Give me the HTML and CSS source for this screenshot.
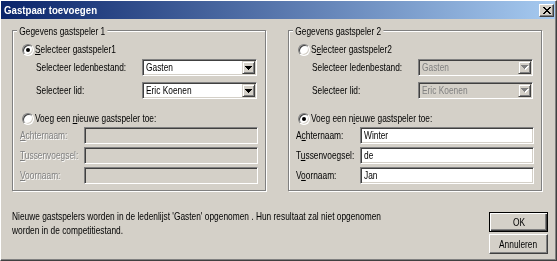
FILE: index.html
```html
<!DOCTYPE html>
<html lang="nl">
<head>
<meta charset="utf-8">
<title>Gastpaar toevoegen</title>
<link rel="stylesheet" href="styles.css">
</head>
<body>
<div class="window">
  <div class="titlebar">
    <span class="title">Gastpaar toevoegen</span>
    <span class="close"><svg width="8" height="7" viewBox="0 0 8 7"><path d="M0 0h2v1H0zM6 0h2v1H6zM1 1h2v1H1zM5 1h2v1H5zM2 2h4v1H2zM3 3h2v1H3zM2 4h4v1H2zM1 5h2v1H1zM5 5h2v1H5zM0 6h2v1H0zM6 6h2v1H6z"/></svg></span>
  </div>
  <div class="content">
    <div class="groups">
      <section class="group">
        <span class="legend">Gegevens gastspeler 1</span>
        <div class="radio-row"><span class="radio checked"></span><span class="t"><u>S</u>electeer gastspeler1</span></div>
        <div class="combo-row first"><span class="label"><span class="t">Selecteer ledenbestand:</span></span><span class="combo"><span class="value t">Gasten</span><span class="drop"><svg width="7" height="4" viewBox="0 0 7 4"><path d="M0 0h7v1H6v1H5v1H4v1H3V3H2V2H1V1H0z"/></svg></span></span></div>
        <div class="combo-row second"><span class="label"><span class="t">Selecteer lid:</span></span><span class="combo"><span class="value t">Eric Koenen</span><span class="drop"><svg width="7" height="4" viewBox="0 0 7 4"><path d="M0 0h7v1H6v1H5v1H4v1H3V3H2V2H1V1H0z"/></svg></span></span></div>
        <div class="radio-row lower"><span class="radio"></span><span class="t">Voeg een <u>n</u>ieuwe gastspeler toe:</span></div>
        <div class="field-row disabled first"><span class="flabel"><span class="t"><u>A</u>chternaam:</span></span><span class="input"></span></div>
        <div class="field-row disabled"><span class="flabel"><span class="t"><u>T</u>ussenvoegsel:</span></span><span class="input"></span></div>
        <div class="field-row disabled"><span class="flabel"><span class="t"><u>V</u>oornaam:</span></span><span class="input"></span></div>
      </section>
      <section class="group">
        <span class="legend">Gegevens gastspeler 2</span>
        <div class="radio-row"><span class="radio"></span><span class="t">S<u>e</u>lecteer gastspeler2</span></div>
        <div class="combo-row first"><span class="label"><span class="t">Selecteer ledenbestand:</span></span><span class="combo off"><span class="value t">Gasten</span><span class="drop"><svg width="8" height="5" viewBox="0 0 8 5"><path fill="#fff" d="M1 1h7v1H7v1H6v1H5v1H4V4H3V3H2V2H1z"/><path fill="#808080" d="M0 0h7v1H6v1H5v1H4v1H3V3H2V2H1V1H0z"/></svg></span></span></div>
        <div class="combo-row second"><span class="label"><span class="t">Selecteer lid:</span></span><span class="combo off"><span class="value t">Eric Koenen</span><span class="drop"><svg width="8" height="5" viewBox="0 0 8 5"><path fill="#fff" d="M1 1h7v1H7v1H6v1H5v1H4V4H3V3H2V2H1z"/><path fill="#808080" d="M0 0h7v1H6v1H5v1H4v1H3V3H2V2H1V1H0z"/></svg></span></span></div>
        <div class="radio-row lower"><span class="radio checked"></span><span class="t">Voeg een n<u>i</u>euwe gastspeler toe:</span></div>
        <div class="field-row first"><span class="flabel"><span class="t">A<u>c</u>hternaam:</span></span><span class="input"><span class="t">Winter</span></span></div>
        <div class="field-row"><span class="flabel"><span class="t">T<u>u</u>ssenvoegsel:</span></span><span class="input"><span class="t">de</span></span></div>
        <div class="field-row"><span class="flabel"><span class="t">V<u>o</u>ornaam:</span></span><span class="input"><span class="t">Jan</span></span></div>
      </section>
    </div>
    <div class="footer">
      <p class="note">Nieuwe gastspelers worden in de ledenlijst 'Gasten' opgenomen . Hun resultaat zal niet opgenomen<br>worden in de competitiestand.</p>
      <div class="buttons">
        <span class="btn default"><span class="t c">OK</span></span>
        <span class="btn"><span class="t c">Annuleren</span></span>
      </div>
    </div>
  </div>
</div>
</body>
</html>
```
FILE: styles.css
```css
* { box-sizing: border-box; }
body {
  margin: 0;
  background: #d4d0c8;
  font-family: "Liberation Sans", Arial, sans-serif;
  font-size: 11px;
  line-height: 13px;
  color: #000;
}
/* the dialog's font is a narrow one: horizontally condensed text */
.t {
  display: inline-block;
  white-space: nowrap;
  transform: scaleX(0.76);
  transform-origin: 0 50%;
}
.t.c { transform-origin: 50% 50%; }
.window {
  width: 557px;
  height: 261px;
  border: 1px solid;
  border-color: #fff #404040 #404040 #fff;
  box-shadow: inset -1px -1px #808080;
  padding: 0 1px 1px 0;
  background: #d4d0c8;
  display: flex;
  flex-direction: column;
}
.titlebar {
  height: 18px;
  display: flex;
  align-items: center;
  justify-content: space-between;
  padding: 0 1px 0 3px;
  background: linear-gradient(to right, #0a246a, #a6caf0);
}
.title {
  color: #fff;
  font-weight: bold;
  font-size: 11px;
  white-space: nowrap;
  transform: scaleX(0.88);
  transform-origin: 0 50%;
}
.close {
  width: 15px;
  height: 13px;
  display: flex;
  align-items: center;
  justify-content: center;
  background: #d4d0c8;
  border: 1px solid;
  border-color: #fff #404040 #404040 #fff;
  box-shadow: inset -1px -1px #808080;
}
.content { padding: 11px 0 0 11px; }
.groups { display: flex; gap: 22px; }
.group {
  position: relative;
  width: 254px;
  height: 161px;
  border: 1px solid #808080;
  box-shadow: inset 1px 1px #fff, 1px 1px #fff;
  padding-top: 12px;
}
.legend {
  position: absolute;
  left: 4px;
  top: -6px;
  padding: 0 3px;
  background: #d4d0c8;
  white-space: nowrap;
  transform: scaleX(0.76);
  transform-origin: 0 50%;
}
.radio-row {
  display: flex;
  align-items: center;
  height: 13px;
  padding-left: 9px;
  gap: 1px;
}
.radio-row.lower { margin-top: 13px; }
.radio {
  position: relative;
  flex: none;
  width: 12px;
  height: 12px;
  border-radius: 50%;
  border: 1px solid;
  border-color: #808080 #fff #fff #808080;
  background: #fff;
  box-shadow: inset 1px 1px #404040, inset -1px -1px #d4d0c8;
}
.radio.checked::after {
  content: "";
  position: absolute;
  left: 3px;
  top: 3px;
  width: 4px;
  height: 4px;
  border-radius: 50%;
  background: #000;
}
.combo-row {
  display: flex;
  align-items: center;
  padding-left: 23px;
}
.combo-row.first { margin-top: 3px; }
.combo-row.second { margin-top: 6px; }
.label { width: 106px; flex: none; }
.combo, .input {
  flex: none;
  border: 1px solid;
  border-color: #808080 #fff #fff #808080;
  box-shadow: inset 1px 1px #404040, inset -1px -1px #d4d0c8;
  background: #fff;
}
.combo {
  width: 115px;
  height: 17px;
  padding: 1px;
  display: flex;
  align-items: center;
  justify-content: space-between;
}
.combo .value { margin-left: 2px; }
.combo.off { background: #d4d0c8; color: #808080; }
.drop {
  width: 13px;
  height: 13px;
  display: flex;
  align-items: center;
  justify-content: center;
  background: #d4d0c8;
  border: 1px solid;
  border-color: #d4d0c8 #404040 #404040 #d4d0c8;
  box-shadow: inset 1px 1px #fff, inset -1px -1px #808080;
}
.field-row {
  display: flex;
  align-items: center;
  padding-left: 7px;
  margin-top: 3px;
}
.field-row.first { margin-top: 2px; }
.flabel { width: 64px; flex: none; }
.input {
  width: 174px;
  height: 17px;
  padding-left: 3px;
  display: flex;
  align-items: center;
}
.disabled .flabel { color: #808080; text-shadow: 1px 1px #fff; }
.disabled .input { background: #d4d0c8; }
.footer {
  display: flex;
  align-items: flex-start;
  margin-top: 18px;
  padding-right: 7px;
}
.note {
  flex: 1 1 0;
  min-width: 0;
  margin: 0;
  line-height: 14px;
  white-space: nowrap;
  transform: scaleX(0.76);
  transform-origin: 0 50%;
}
.buttons {
  flex: none;
  display: flex;
  flex-direction: column;
  gap: 2px;
  margin-top: 3px;
}
.btn {
  width: 59px;
  height: 20px;
  display: flex;
  align-items: center;
  justify-content: center;
  border: 1px solid;
  border-color: #fff #404040 #404040 #fff;
  box-shadow: inset -1px -1px #808080;
}
.btn.default {
  border-color: #000;
  box-shadow: inset 1px 1px #fff, inset -1px -1px #404040, inset -2px -2px #808080;
}
```
